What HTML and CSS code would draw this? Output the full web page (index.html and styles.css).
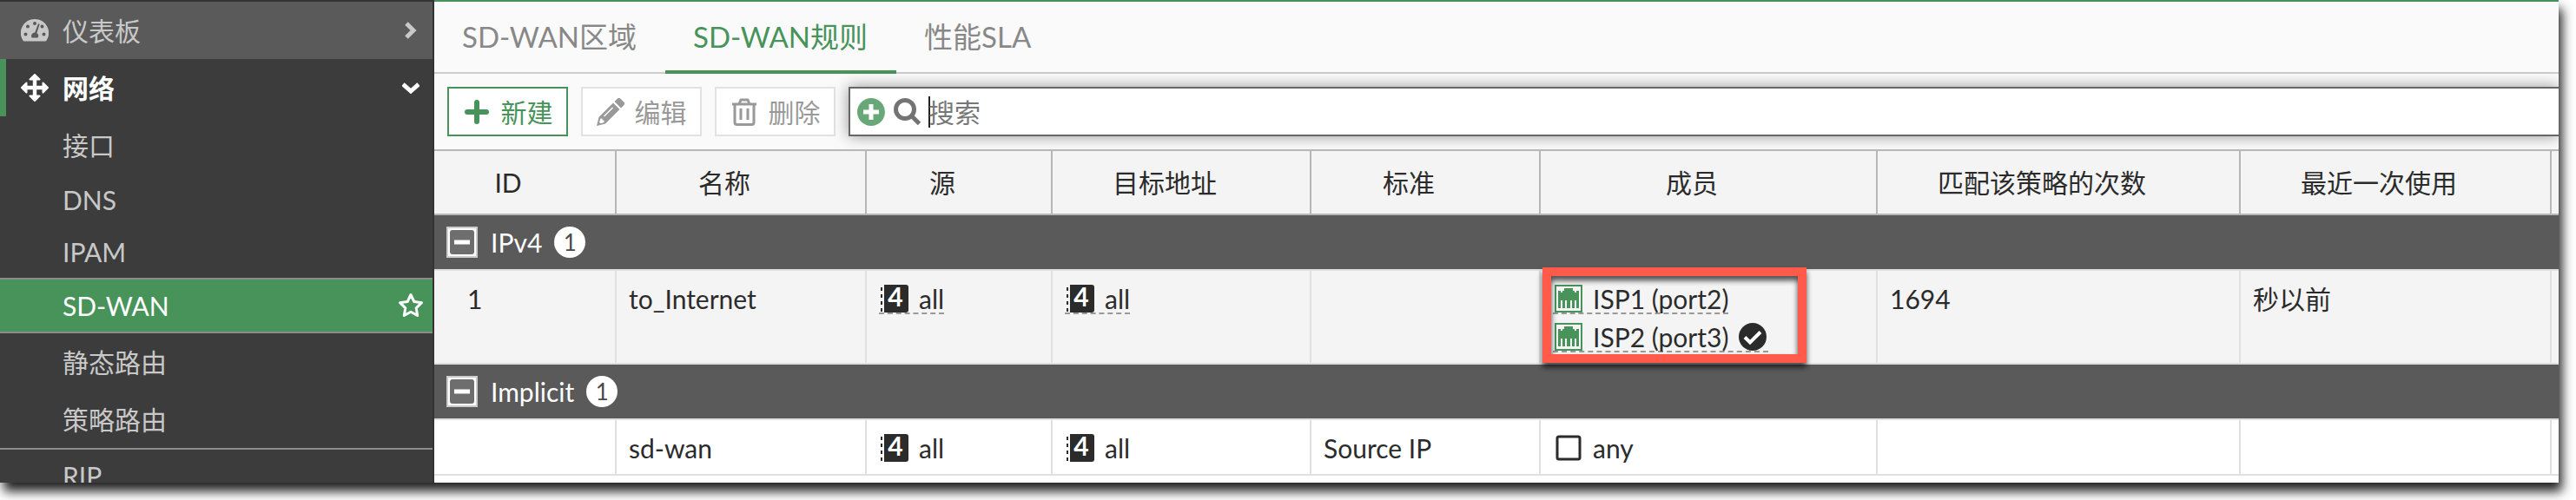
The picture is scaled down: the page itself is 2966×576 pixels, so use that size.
FILE: index.html
```html
<!DOCTYPE html>
<html lang="zh-CN">
<head>
    <meta charset="UTF-8">
    <meta name="viewport" content="width=device-width, initial-scale=1.0">
    <title>SD-WAN规则</title>
    <link rel="stylesheet" href="styles.css">
</head>
<body>
    <!-- Shared icons -->
    <svg class="sprite" aria-hidden="true">
        <symbol id="icon-address" viewBox="0 0 32 32">
            <path fill="#2b2b2b" d="M4 0h25a3 3 0 0 1 3 3v26a3 3 0 0 1-3 3H4z"/>
            <path fill="none" stroke="#2b2b2b" stroke-width="2" stroke-dasharray="4 4" d="M1 3v28"/>
            <text class="address-digit" x="17" y="25">4</text>
        </symbol>
        <symbol id="icon-port" viewBox="0 0 32 32">
            <path fill="none" stroke="#47935a" stroke-width="2" d="M1 1h30v30H1z"/>
            <path fill="#47935a" d="M4 7h3v2h2V7h2V4h10v3h2v2h2V7h3v20h-3v-9h-2v9h-3v-9h-2v9h-4v-9h-2v9H9v-9H7v9H4z"/>
        </symbol>
        <symbol id="icon-collapse" viewBox="0 0 36 36">
            <path fill="#ccc" d="M0 0h36v36H0z"/>
            <path fill="#fff" d="M2 2h32v32H2z"/>
            <rect x="4" y="4" width="28" height="28" rx="3" fill="#6e6e6e"/>
            <path fill="#fff" d="M9 15.500h18v5H9z"/>
        </symbol>
    </svg>

    <div class="window">
        <nav class="sidebar">
            <a href="#" class="menu-item dashboard">
                <svg class="menu-icon" viewBox="0 0 32 32">
                    <path fill="currentColor" fill-rule="evenodd" d="M16 3A16 16 0 0 0 2.200 27.200Q2.800 28.500 4 28.500h24q1.200 0 1.800-1.300A16 16 0 0 0 16 3zM16 6a2 2 0 1 1 0 4 2 2 0 0 1 0-4zM8 9.500a2 2 0 1 1 0 4 2 2 0 0 1 0-4zM24.500 9.500a2 2 0 1 1 0 4 2 2 0 0 1 0-4zM5.500 18.500a2 2 0 1 1 0 4 2 2 0 0 1 0-4zM26.500 18.500a2 2 0 1 1 0 4 2 2 0 0 1 0-4zM20 8.200l1.700.600-3.300 10.200a4 4 0 0 1 1 5.500h-6.800a4 4 0 0 1 3.600-6z"/>
                </svg>
                <span>仪表板</span>
                <svg class="arrow" viewBox="0 0 20 20"><path d="M5 2l8 8-8 8"/></svg>
            </a>
            <a href="#" class="menu-item network">
                <svg class="menu-icon" viewBox="0 0 32 32">
                    <path fill="currentColor" stroke="currentColor" stroke-width="2" stroke-linejoin="round" d="M16 1l5.500 5.500H17.200v8.300h8.300V10.500L31 16l-5.500 5.500v-4.300h-8.300v8.300h4.300L16 31l-5.500-5.500h4.300v-8.300H6.500v4.300L1 16l5.500-5.500v4.300h8.300V6.500h-4.300z"/>
                </svg>
                <span>网络</span>
                <svg class="arrow" viewBox="0 0 20 20"><path d="M1 6l9 8 9-8"/></svg>
            </a>
            <a href="#" class="menu-item sub">接口</a>
            <a href="#" class="menu-item sub latin">DNS</a>
            <a href="#" class="menu-item sub latin">IPAM</a>
            <a href="#" class="menu-item sub latin selected">
                <span>SD-WAN</span>
                <svg class="star" viewBox="0 0 30 30"><path d="M15 2.500l3.800 8 8.700 1.200-6.300 6.100 1.500 8.700-7.700-4.200-7.700 4.200 1.500-8.700-6.300-6.100 8.700-1.200z"/></svg>
            </a>
            <a href="#" class="menu-item sub">静态路由</a>
            <a href="#" class="menu-item sub">策略路由</a>
            <a href="#" class="menu-item sub latin divided">RIP</a>
        </nav>

        <main class="content">
            <div class="tabs">
                <a href="#" class="tab">SD-WAN区域</a>
                <a href="#" class="tab active">SD-WAN规则</a>
                <a href="#" class="tab">性能SLA</a>
            </div>

            <div class="toolbar">
                <button type="button" class="btn btn-new">
                    <svg viewBox="0 0 32 32"><path fill="none" stroke="currentColor" stroke-width="6" stroke-linecap="round" d="M16 5v22M5 16h22"/></svg>
                    新建
                </button>
                <button type="button" class="btn" disabled>
                    <svg viewBox="0 0 32 32"><path fill="currentColor" fill-rule="evenodd" d="M19 5.500l7.500 7.500L10 29.500 0 32l2.500-10zM20.500 4l3-3a3 3 0 0 1 4.200 0l3.300 3.300a3 3 0 0 1 0 4.200l-3 3zM18 10.500L8 20.500l1 1 10-10zM4.500 23.500L3 28l1.500 1.200L8.500 28v-2.500H6.500v-2z"/></svg>
                    编辑
                </button>
                <button type="button" class="btn" disabled>
                    <svg viewBox="0 0 32 32"><path fill="none" stroke="currentColor" stroke-width="3" stroke-linejoin="round" d="M2 7h28M10 7l2-5h8l2 5M5 7v21a2.500 2.500 0 0 0 2.500 2.500h17A2.500 2.500 0 0 0 27 28V7M12 12v13M20 12v13"/></svg>
                    删除
                </button>
                <div class="search">
                    <svg class="add-filter" viewBox="0 0 32 32"><circle cx="16" cy="16" r="16"/><path d="M16 7v18M7 16h18"/></svg>
                    <svg class="magnifier" viewBox="0 0 32 32"><circle cx="13" cy="13" r="10.500"/><path d="M20.500 20.500l9 9"/></svg>
                    <span class="caret"></span>
                    <input type="text" placeholder="搜索" aria-label="搜索">
                </div>
            </div>

            <table class="rules">
                <colgroup>
                    <col class="col-id">
                    <col class="col-name">
                    <col class="col-source">
                    <col class="col-target">
                    <col class="col-criteria">
                    <col class="col-members">
                    <col class="col-hits">
                    <col class="col-last">
                    <col>
                </colgroup>
                <thead>
                    <tr>
                        <th>ID</th>
                        <th>名称</th>
                        <th>源</th>
                        <th>目标地址</th>
                        <th>标准</th>
                        <th>成员</th>
                        <th>匹配该策略的次数</th>
                        <th>最近一次使用</th>
                        <th></th>
                    </tr>
                </thead>
                <tbody>
                    <tr class="group">
                        <td colspan="9">
                            <div class="group-title">
                                <svg><use href="#icon-collapse"/></svg>
                                <span>IPv4</span>
                                <span class="count">1</span>
                            </div>
                        </td>
                    </tr>
                    <tr class="rule">
                        <td class="id">1</td>
                        <td>to_Internet</td>
                        <td><div class="object linked"><svg><use href="#icon-address"/></svg>all</div></td>
                        <td><div class="object linked"><svg><use href="#icon-address"/></svg>all</div></td>
                        <td></td>
                        <td class="members">
                            <div class="object linked"><svg><use href="#icon-port"/></svg>ISP1 (port2)</div>
                            <div class="object linked">
                                <svg><use href="#icon-port"/></svg>ISP2 (port3)
                                <svg class="check" viewBox="0 0 32 32"><circle cx="16" cy="16" r="16" fill="#2b2b2b"/><path fill="none" stroke="#fff" stroke-width="4" d="M7 16.500l6 6L25 10.500"/></svg>
                            </div>
                            <div class="highlight"></div>
                        </td>
                        <td>1694</td>
                        <td>秒以前</td>
                        <td></td>
                    </tr>
                    <tr class="group">
                        <td colspan="9">
                            <div class="group-title">
                                <svg><use href="#icon-collapse"/></svg>
                                <span>Implicit</span>
                                <span class="count">1</span>
                            </div>
                        </td>
                    </tr>
                    <tr class="rule implicit">
                        <td class="id"></td>
                        <td>sd-wan</td>
                        <td><div class="object"><svg><use href="#icon-address"/></svg>all</div></td>
                        <td><div class="object"><svg><use href="#icon-address"/></svg>all</div></td>
                        <td>Source IP</td>
                        <td><div class="object"><svg viewBox="0 0 32 32"><rect x="3" y="3" width="26" height="26" rx="2" fill="none" stroke="#2b2b2b" stroke-width="3"/></svg>any</div></td>
                        <td></td>
                        <td></td>
                        <td></td>
                    </tr>
                </tbody>
            </table>
        </main>
    </div>
</body>
</html>
```

FILE: styles.css
```css
* {
    box-sizing: border-box;
}

body {
    margin: 0;
    height: 100vh;
    padding: 0 20px 20px 0;
    overflow: hidden;
    background: #fff;
    color: #2b2b2b;
    font-family: Lato, "Noto Sans CJK SC", sans-serif;
    font-size: 30px;
    line-height: 36px;
}

a {
    color: inherit;
    text-decoration: none;
}

.sprite {
    display: none;
}

.address-digit {
    fill: #fff;
    font-size: 30px;
    font-weight: bold;
    text-anchor: middle;
}

.window {
    display: flex;
    height: 100%;
    background: #fff;
    box-shadow: 4px 10px 12px #222;
    clip-path: inset(0 -20px -20px 0);
}

/* Sidebar */
.sidebar {
    flex: none;
    width: 500px;
    overflow: hidden;
    background: #3c3c3c;
    border-top: 2px solid #333;
    border-right: 2px solid #333;
    color: #c8c8c8;
}

.menu-item {
    display: flex;
    align-items: center;
    height: 66px;
    padding: 0 15px 0 24px;
}

.menu-icon {
    width: 32px;
    height: 32px;
    margin-right: 16px;
}

.dashboard {
    background: #5a5a5a;
}

.network {
    padding-left: 17px;
    border-left: 7px solid #47935a;
    color: #fff;
    font-weight: bold;
}

.arrow {
    width: 20px;
    height: 20px;
    margin-left: auto;
    fill: none;
    stroke: currentColor;
    stroke-width: 5px;
}

.sub {
    padding-left: 72px;
}

.latin {
    height: 60px;
}

.selected {
    height: 64px;
    padding-right: 10px;
    background: #47935a;
    border-top: 2px solid #8c8c8c;
    border-bottom: 2px solid #8c8c8c;
    color: #fff;
}

.star {
    width: 30px;
    height: 30px;
    margin-left: auto;
    fill: none;
    stroke: currentColor;
    stroke-width: 3px;
    stroke-linejoin: round;
}

.divided {
    height: 62px;
    border-top: 2px solid #8c8c8c;
}

/* Content */
.content {
    flex: 1;
    min-width: 0;
    overflow: hidden;
    border-top: 2px solid #47935a;
}

.tabs {
    display: flex;
    height: 83px;
    background: #fafafa;
    border-bottom: 2px solid #ccc;
    color: #888;
    font-size: 33px;
}

.tab {
    height: 83px;
    padding: 21px 33px 0 32px;
    line-height: 38px;
}

.tab.active {
    border-bottom: 4px solid #47935a;
    color: #47935a;
}

.toolbar {
    display: flex;
    gap: 15px;
    height: 87px;
    padding: 15px 0 15px 15px;
    background: #fafafa;
}

.btn {
    display: flex;
    flex: none;
    align-items: center;
    justify-content: center;
    gap: 12px;
    width: 139px;
    padding: 0;
    background: #fff;
    border: 2px solid #e2e2e2;
    color: #999;
    font: inherit;
}

.btn svg {
    width: 32px;
    height: 32px;
}

.btn-new {
    border-color: #47935a;
    color: #47935a;
}

.search {
    display: flex;
    flex: 1;
    align-items: center;
    padding-left: 8px;
    background: #fff;
    border: 2px solid #666;
    border-right: 0;
    box-shadow: 0 0 16px rgba(0, 0, 0, 0.4);
}

.search svg {
    width: 32px;
    height: 32px;
}

.add-filter {
    margin-right: 10px;
    fill: #68a878;
    stroke: #fff;
    stroke-width: 5px;
}

.add-filter circle {
    stroke: none;
}

.magnifier {
    margin-right: 8px;
    fill: none;
    stroke: #737373;
    stroke-width: 5px;
}

.caret {
    width: 2px;
    height: 36px;
    margin-right: -2px;
    background: #222;
}

.search input {
    flex: 1;
    padding: 0;
    border: 0;
    outline: none;
    background: transparent;
    color: inherit;
    font: inherit;
}

.search input::placeholder {
    color: #777;
}

/* Rules table */
.rules {
    position: relative;
    width: 100%;
    table-layout: fixed;
    border-collapse: separate;
    border-spacing: 0;
    border-top: 2px solid #b7b7b7;
    background: #fff;
}

.col-id { width: 210px; }
.col-name { width: 288px; }
.col-source { width: 214px; }
.col-target { width: 298px; }
.col-criteria { width: 264px; }
.col-members { width: 388px; }
.col-hits { width: 418px; }
.col-last { width: 358px; }

.rules th,
.rules td {
    border-right: 2px solid #e0e0e0;
    border-bottom: 2px solid #e0e0e0;
    text-align: left;
    vertical-align: top;
}

.rules th {
    height: 74px;
    padding: 0 38px 0 0;
    background: #f4f4f4;
    border-color: #b7b7b7;
    font-weight: normal;
    text-align: center;
    vertical-align: middle;
}

.rules td {
    padding: 14px 0 12px 14px;
}

.rules th:last-child,
.rules td:last-child {
    padding: 0;
    border-right: 0;
}

.rules .id {
    padding-left: 38px;
}

.rule {
    background: #f4f4f4;
}

.implicit {
    background: #fff;
}

.group {
    background: #5a5a5a;
    color: #fff;
}

.group-title {
    display: flex;
    align-items: center;
    height: 62px;
    padding: 0 14px;
}

.group-title svg {
    width: 36px;
    height: 36px;
    margin-right: 15px;
}

.count {
    width: 36px;
    height: 36px;
    margin-left: 14px;
    border-radius: 50%;
    background: #fff;
    color: #4a4a4a;
    font-size: 26px;
    text-align: center;
}

.object {
    display: flex;
    align-items: center;
    width: fit-content;
    height: 36px;
    padding: 2px 0 0 2px;
    border-bottom: 2px solid transparent;
}

.object svg {
    width: 32px;
    height: 32px;
    margin-right: 12px;
}

.object .check {
    margin: 0 2px 0 12px;
}

.linked {
    border-bottom: 2px dashed #999;
}

.object + .object {
    margin-top: 8px;
}

.members {
    position: relative;
}

/* Callout frame lying over the member list */
.highlight {
    position: absolute;
    top: -4px;
    left: 2px;
    width: 304px;
    height: 110px;
    border: 10px solid #ff5a4a;
    filter: drop-shadow(0 5px 3px rgba(0, 0, 0, 0.7));
}
```
